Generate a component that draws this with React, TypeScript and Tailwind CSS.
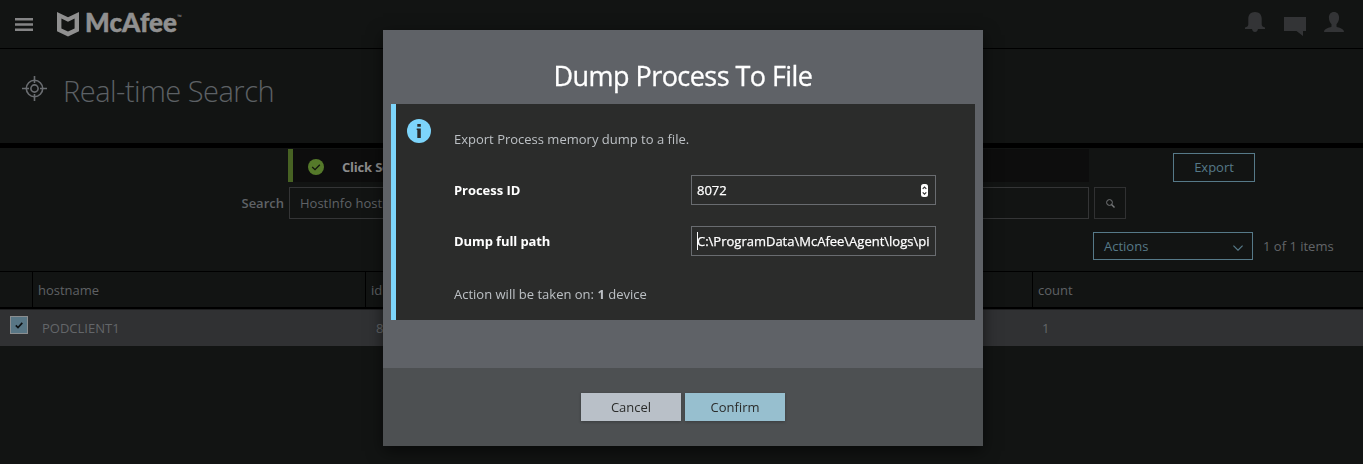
import React from 'react';

const cell = 'flex h-[35px] items-center border-r border-black pl-[5px] pt-[3px]';

function Logo() {
  return (
    <div className="flex h-full items-start text-[#909090]">
      <svg className="mt-[12px] h-[25px] w-[22px]" viewBox="0 0 22 25" fill="currentColor">
        <path d="M0 0 L11 5.3 L22 0 V19.2 L11 24.4 L0 19.2 Z M4.4 6.6 V16.4 L11 19.600 L17.600 16.4 V6.6 L11 9.8 Z" fillRule="evenodd" />
      </svg>
      <span className="ml-[6px] mt-[7px] text-[26px] leading-[30px] font-black tracking-[0.1px] [-webkit-text-stroke:0.5px_#909090] font-['Lato',sans-serif]">McAfee</span>
      <span className="mt-[14px] text-[6px] leading-[6px]">™</span>
    </div>
  );
}

function TopBar() {
  return (
    <header className="flex h-[49px] items-start justify-between border-b border-black">
      <div className="flex h-full">
        <svg className="ml-[15px] mr-[24px] mt-[18px] h-[13px] w-[18px]" viewBox="0 0 18 13" fill="#858586">
          <path d="M0 0h18v2.4H0zM0 5.2h18v2.6H0zM0 10.6h18V13H0z" />
        </svg>
        <Logo />
      </div>
      <div className="flex pr-[19px] text-[#333436]">
        <svg className="mt-[12px] h-[20px] w-[20px]" viewBox="0 0 20 20" fill="currentColor">
          <path d="M10 0C5.800 0 3.300 2.800 3.300 6.500V12.500C3.300 14 2 15 0 15.500V17H7C7.400 19 8.300 20 10 20S12.600 19 13 17H20V15.500C18 15 16.700 14 16.700 12.500V6.500C16.700 2.800 14.200 0 10 0Z" />
        </svg>
        <svg className="ml-[19px] mt-[17px] h-[19px] w-[22px]" viewBox="0 0 22 19" fill="currentColor">
          <path d="M0 0H22V14H19V19L12.500 14H0Z" />
        </svg>
        <svg className="ml-[18px] mt-[12px] h-[20px] w-[20px]" viewBox="0 0 20 20" fill="currentColor">
          <path d="M10 0C6.700 0 4.900 2.400 4.900 5.800C4.900 8.600 6.200 11 7.500 12.200V14.500C7.500 15.600 0 15.700 0 20H20C20 15.700 12.500 15.600 12.500 14.500V12.200C13.800 11 15.100 8.600 15.100 5.800C15.100 2.400 13.300 0 10 0Z" />
        </svg>
      </div>
    </header>
  );
}

function PageTitle() {
  return (
    <div className="flex h-[99px] items-start border-b-[5px] border-black text-[#5d6165]">
      <svg className="ml-[22px] mt-[27px] h-[25px] w-[25px]" viewBox="0 0 25 25" fill="none" stroke="#6a6d71" strokeWidth="1.600">
        <circle cx="12.500" cy="12.500" r="8.200" />
        <circle cx="12.500" cy="12.500" r="3.600" />
        <path d="M12.500 0v7M12.500 18v7M0 12.500h7M18 12.500h7" />
      </svg>
      <h1 className="ml-[16px] mt-[22px] text-[29px] leading-[40px] font-light tracking-[-0.5px]">Real-time Search</h1>
    </div>
  );
}

function SearchArea() {
  return (
    <>
      <div className="mt-px flex h-[33px] items-center">
        <div className="ml-[288px] flex h-full w-[801px] items-center border-l-[5px] border-[#476223] bg-[#0d0d0d] pt-[3px]">
          <svg className="ml-[15px] h-[16px] w-[16px]" viewBox="0 0 16 16">
            <circle cx="8" cy="8" r="8" fill="#55792a" />
            <path d="M4.200 8l2.800 2.700 4.800-5" fill="none" stroke="#10140d" strokeWidth="1.300" />
          </svg>
          <span className="ml-[18px] pt-px text-[13px] font-bold tracking-[-0.2px] text-[#8b8b8b]">Click Search</span>
        </div>
        <button className="ml-[84px] mt-[4px] h-[29px] w-[82px] border border-[#567988] text-[13px] text-[#567988]">Export</button>
      </div>
      <div className="mt-[5px] flex h-[32px] text-[13px] text-[#5f6266]">
        <label className="w-[289px] pr-[5px] text-right font-semibold leading-[32px]">Search</label>
        <div className="w-[800px] border border-[#343536] pl-[10px] leading-[31px]">HostInfo hostname</div>
        <button className="ml-[5px] flex w-[32px] items-center justify-center border border-[#303132]">
          <svg className="h-[9px] w-[9px]" viewBox="0 0 9 9" fill="none" stroke="#77797b">
            <circle cx="3.500" cy="3.500" r="2.900" />
            <path d="M5.500 5.500L8.500 8.500" strokeWidth="1.400" />
          </svg>
        </button>
      </div>
      <div className="mt-[13px] flex h-[28px] pl-[1093px] text-[13px]">
        <div className="flex w-[160px] items-center justify-between border border-[#567988] pl-[10px] pr-[9px] text-[#567988]">
          <span className="pt-[2px]">Actions</span>
          <svg className="mt-[4px] h-[6px] w-[10px]" viewBox="0 0 10 6" fill="none" stroke="currentColor" strokeWidth="1.200">
            <path d="M.4.600L5 5.200L9.600.600" />
          </svg>
        </div>
        <span className="ml-[10px] leading-[28px] text-[#626568]">1 of 1 items</span>
      </div>
    </>
  );
}

function Results() {
  return (
    <div className="mt-[11px] border-t border-black text-[13px] text-[#5f6164]">
      <div className="flex border-b-2 border-black">
        <div className="h-[35px] w-[33px] border-r border-black" />
        <div className={cell + ' w-[333px]'}>hostname</div>
        <div className={cell + ' w-[667px]'}>id</div>
        <div className="flex h-[35px] items-center pl-[5px] pt-[3px]">count</div>
      </div>
      <div className="flex h-[37px] items-center border-t border-[#1e1f20] bg-[#303133] pt-px text-[#636669]">
        <div className="mb-[7px] ml-[10px] flex h-[18px] w-[18px] items-center justify-center border border-[#8b8e90] bg-[#587685]">
          <svg className="h-[7px] w-[8px]" viewBox="0 0 8 7" fill="none" stroke="#0c1114" strokeWidth="1.700">
            <path d="M.8 3.300L3 5.500L7.300.900" />
          </svg>
        </div>
        <span className="ml-[14px] w-[334px]">PODCLIENT1</span>
        <span className="w-[666px]">8072</span>
        <span>1</span>
      </div>
    </div>
  );
}

function DumpDialog() {
  return (
    <div role="dialog" className="flex h-[416px] w-[600px] flex-col bg-[#5f6267] text-[13px] text-[#bcc0c4] shadow-[0_5px_15px_rgba(0,0,0,0.55)]">
      <h2 className="pt-[28px] text-center text-[27px] leading-[36px] tracking-[-0.55px] text-white [-webkit-text-stroke:0.3px_white]">Dump Process To File</h2>
      <div className="mx-[8px] mt-[10px] flex h-[216px] items-start border-l-[5px] border-[#7dd5fb] bg-[#2b2c2b]">
        <svg className="ml-[11px] mt-[15px] h-[24px] w-[24px]" viewBox="0 0 24 24">
          <circle cx="12" cy="12" r="12" fill="#7dd5fb" />
          <path d="M10.300 5h3.500v2.800h-3.500zM9.700 9.500h4.100V19h-3.500v-8h-.6z" fill="#2b2c2b" />
        </svg>
        <div className="ml-[23px] flex flex-col">
          <p className="mt-[25px] h-[20px] leading-[20px]">Export Process memory dump to a file.</p>
          <div className="mt-[26px] flex h-[30px] items-center text-white">
            <label className="w-[237px] pt-[2px] font-bold tracking-[-0.05px]">Process ID</label>
            <div className="flex h-[30px] w-[245px] items-center justify-between border border-[#696c70] pl-[5px] pr-[7px]">
              <span className="pt-[2px] [-webkit-text-stroke:0.25px_white]">8072</span>
              <svg className="h-[13px] w-[7px]" viewBox="0 0 7 13">
                <rect width="7" height="13" rx="2.500" fill="#fff" />
                <path d="M1.700 4.800L3.500 3l1.800 1.800M1.700 8.400l1.800 1.800 1.800-1.800" fill="none" stroke="#333" strokeWidth="1.200" />
              </svg>
            </div>
          </div>
          <div className="mt-[21px] flex h-[30px] items-center text-white">
            <label className="w-[237px] pt-[2px] font-bold tracking-[-0.1px]">Dump full path</label>
            <div className="flex h-[30px] w-[245px] items-center border border-[#696c70] px-[5px]">
              <span className="-mr-px h-[18px] w-px shrink-0 bg-white" />
              <span className="overflow-hidden whitespace-nowrap pt-[2px] [-webkit-text-stroke:0.25px_white]">C:\ProgramData\McAfee\Agent\logs\pi</span>
            </div>
          </div>
          <p className="mt-[28px] leading-[20px]">Action will be taken on: <b>1</b> device</p>
        </div>
      </div>
      <div className="mt-auto flex h-[78px] items-start justify-center gap-[4px] bg-[#4d5052] pt-[25px] text-[#2b2c2b]">
        <button className="h-[28px] w-[100px] bg-[#b9c0c8] pt-[2px] shadow-[0_1px_3px_rgba(0,0,0,0.25)]">Cancel</button>
        <button className="h-[28px] w-[100px] bg-[#97bfcf] pt-[2px] shadow-[0_1px_3px_rgba(0,0,0,0.25)]">Confirm</button>
      </div>
    </div>
  );
}

export default function App() {
  return (
    <div className="h-[464px] overflow-hidden bg-[#121413] font-['Open_Sans',sans-serif]">
      <TopBar />
      <PageTitle />
      <SearchArea />
      <Results />
      <div className="fixed inset-0 flex items-start justify-center pt-[30px] pl-[3px]">
        <DumpDialog />
      </div>
    </div>
  );
}
